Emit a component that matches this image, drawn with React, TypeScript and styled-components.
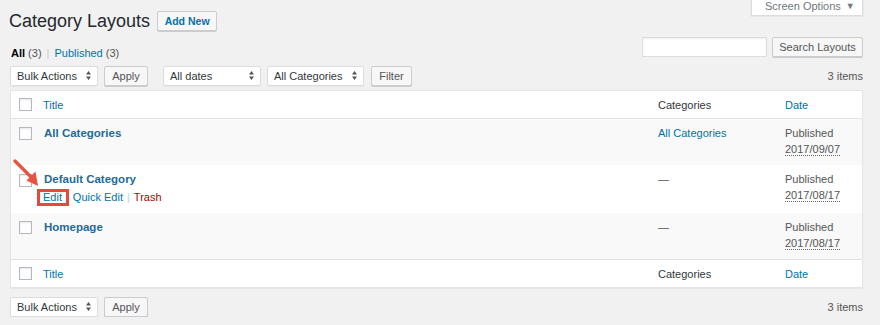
import styled, { createGlobalStyle } from 'styled-components';

const GlobalStyle = createGlobalStyle`
  * { box-sizing: border-box; }
  body {
    margin: 0;
    background: #f1f1f1;
    font-family: "Liberation Sans", Arial, sans-serif;
    font-size: 11px;
    color: #444;
  }
`

const Page = styled.div`
  padding: 0 17px 0 10px;
`

const Header = styled.div`
  display: flex;
  justify-content: space-between;
  align-items: flex-start;
  height: 37px;
`

const TitleGroup = styled.div`
  display: flex;
  align-items: center;
  gap: 7px;
  padding-top: 11px;
  >h1{
    margin: 0 0 0 -1px;
    font-size: 18px;
    line-height: 20px;
    font-weight: 400;
    color: #23282d;
  }
`

const Button = styled.button<{ primary?: boolean; w: number }>`
  width: ${p => p.w}px;
  height: 20px;
  padding: 0;
  font-family: inherit;
  font-size: ${p => (p.primary ? '10.5px' : '11px')};
  font-weight: ${p => (p.primary ? 700 : 400)};
  color: ${p => (p.primary ? '#0073aa' : '#555')};
  background: #f7f7f7;
  border: 1px solid #ccc;
  border-radius: 2px;
  box-shadow: 0 1px 0 #ccc;
`

const ScreenTab = styled.div`
  width: 112px;
  height: 16px;
  padding-left: 13px;
  background: #fff;
  border: 1px solid #ddd;
  border-top: none;
  box-shadow: 0 0 0 1px rgba(0,0,0,.03);
  color: #72777c;
  line-height: 12px;
  >span{
    font-size: 9px;
    margin-left: 5px;
    vertical-align: 1px;
  }
`

const SubRow = styled.div`
  display: flex;
  justify-content: space-between;
  align-items: flex-start;
`

const Views = styled.div`
  padding: 9px 0 0 1px;
  line-height: 14px;
  color: #555;
  >b{ color: #000; }
  >a{ color: #0073aa; text-decoration: none; }
  >i{ font-style: normal; color: #ccc; margin: 0 5px; }
`

const SearchBox = styled.div`
  display: flex;
  gap: 5px;
  >input{
    width: 125px;
    height: 20px;
    border: 1px solid #ddd;
    background: #fff;
    box-shadow: inset 0 1px 2px rgba(0,0,0,.07);
  }
`

const Tablenav = styled.div<{ top: number }>`
  display: flex;
  align-items: center;
  height: 21px;
  margin-top: ${p => p.top}px;
  >.count{
    margin-left: auto;
    color: #555;
  }
`

const SelectBox = styled.div<{ w: number; gap: number; lead?: number }>`
  display: flex;
  align-items: center;
  justify-content: space-between;
  width: ${p => p.w}px;
  height: 20px;
  margin-left: ${p => p.lead ?? 0}px;
  margin-right: ${p => p.gap}px;
  padding: 0 6px 0 6px;
  background: #fff;
  border: 1px solid #ddd;
  border-radius: 2px;
  box-shadow: 0 1px 1px rgba(0,0,0,.05);
  color: #32373c;
`

const Caret = () => (
  <svg width="5" height="9" viewBox="0 0 5 9">
    <path d="M2.5 0 L5 3.4 H0 Z M2.5 9 L5 5.6 H0 Z" fill="#555" />
  </svg>
)

const Table = styled.table`
  width: 100%;
  margin-top: 4px;
  table-layout: fixed;
  border-collapse: separate;
  border-spacing: 0;
  background: #fff;
  border: 1px solid #e5e5e5;
  box-shadow: 0 1px 1px rgba(0,0,0,.04);
  line-height: 16px;
`

const Row = styled.tr<{ striped?: boolean }>`
  background: ${p => (p.striped ? '#f9f9f9' : '#fff')};
  >td{
    padding: 6px 8px 8px;
    vertical-align: top;
    color: #555;
  }
`

const HeadCell = styled.th<{ w?: number; foot?: boolean }>`
  width: ${p => (p.w ? `${p.w}px` : 'auto')};
  padding: 6px 8px 5px;
  text-align: left;
  font-weight: 400;
  color: #32373c;
  ${p => (p.foot ? 'border-top: 1px solid #e1e1e1;' : 'border-bottom: 1px solid #e1e1e1;')}
  >a{ color: #0073aa; text-decoration: none; }
`

const CheckCell = styled.td`
  position: relative;
  width: 24px;
  padding: 0 0 0 8px !important;
`

const HeadCheck = styled.th<{ foot?: boolean }>`
  width: 24px;
  padding: 0 0 0 8px;
  vertical-align: top;
  ${p => (p.foot ? 'border-top: 1px solid #e1e1e1;' : 'border-bottom: 1px solid #e1e1e1;')}
`

const Check = styled.span<{ top: number }>`
  display: block;
  width: 13px;
  height: 13px;
  margin-top: ${p => p.top}px;
  background: #fff;
  border: 1px solid #b4b9be;
  box-shadow: inset 0 1px 2px rgba(0,0,0,.1);
`

const RowTitle = styled.a`
  display: block;
  padding-left: 1px;
  font-size: 11.5px;
  font-weight: 700;
  color: #1f6a98;
  text-decoration: none;
`

const RowActions = styled.div`
  padding-top: 2px;
  color: #ccc;
  >a{ color: #0073aa; text-decoration: none; }
  >.trash{ color: #a00; }
  >i{ font-style: normal; margin: 0 4px; }
`

const Highlight = styled.a`
  position: relative;
  &::after{
    content: '';
    position: absolute;
    left: -6px;
    right: -7px;
    top: -2px;
    bottom: -3px;
    border: 3px solid #e8483b;
  }
`

const Arrow = styled.svg`
  position: absolute;
  left: 2px;
  top: -6px;
`

const CatLink = styled.a`
  color: #0073aa;
  text-decoration: none;
`

const DateAbbr = styled.abbr`
  text-decoration: none;
  border-bottom: 1px dotted #666;
`

type Item = { title: string; category: string; date: string; striped: boolean; active?: boolean }

const items: Item[] = [
  { title: 'All Categories', category: 'All Categories', date: '2017/09/07', striped: true },
  { title: 'Default Category', category: '—', date: '2017/08/17', striped: false, active: true },
  { title: 'Homepage', category: '—', date: '2017/08/17', striped: true },
]

function HeadRow({ foot }: { foot?: boolean }) {
  return (
    <tr>
      <HeadCheck foot={foot}><Check top={7} /></HeadCheck>
      <HeadCell foot={foot}><a>Title</a></HeadCell>
      <HeadCell foot={foot} w={127}>Categories</HeadCell>
      <HeadCell foot={foot} w={85}><a>Date</a></HeadCell>
    </tr>
  )
}

function App() {
  return (
    <Page>
      <GlobalStyle />
      <Header>
        <TitleGroup>
          <h1>Category Layouts</h1>
          <Button primary w={60}>Add New</Button>
        </TitleGroup>
        <ScreenTab>Screen Options<span>▼</span></ScreenTab>
      </Header>
      <SubRow>
        <Views>
          <b>All</b> (3)<i>|</i><a>Published</a> (3)
        </Views>
        <SearchBox>
          <input type="search" />
          <Button w={91}>Search Layouts</Button>
        </SearchBox>
      </SubRow>
      <Tablenav top={5}>
        <SelectBox w={88} gap={6}>Bulk Actions<Caret /></SelectBox>
        <Button w={44}>Apply</Button>
        <SelectBox w={98} gap={6} lead={15}>All dates<Caret /></SelectBox>
        <SelectBox w={97} gap={7}>All Categories<Caret /></SelectBox>
        <Button w={41}>Filter</Button>
        <span className="count">3 items</span>
      </Tablenav>
      <Table>
        <thead><HeadRow /></thead>
        <tbody>
          {items.map(item => (
            <Row key={item.title} striped={item.striped}>
              <CheckCell>
                <Check top={item.active ? 9 : 8} />
                {item.active && (
                  <Arrow width="34" height="30" viewBox="0 0 34 30">
                    <path d="M2 2 L19 19" stroke="#e8533f" strokeWidth="3.2" strokeLinecap="round" />
                    <path d="M25 27 L13.5 21.5 L22.5 12.5 Z" fill="#e8533f" />
                  </Arrow>
                )}
              </CheckCell>
              <td>
                <RowTitle>{item.title}</RowTitle>
                {item.active && (
                  <RowActions>
                    <Highlight>Edit</Highlight><i>|</i><a>Quick Edit</a><i>|</i><a className="trash">Trash</a>
                  </RowActions>
                )}
              </td>
              <td>{item.category === '—' ? item.category : <CatLink>{item.category}</CatLink>}</td>
              <td>Published<br /><DateAbbr>{item.date}</DateAbbr></td>
            </Row>
          ))}
        </tbody>
        <tfoot><HeadRow foot /></tfoot>
      </Table>
      <Tablenav top={8}>
        <SelectBox w={88} gap={6}>Bulk Actions<Caret /></SelectBox>
        <Button w={44}>Apply</Button>
        <span className="count">3 items</span>
      </Tablenav>
    </Page>
  )
}

export default App;
